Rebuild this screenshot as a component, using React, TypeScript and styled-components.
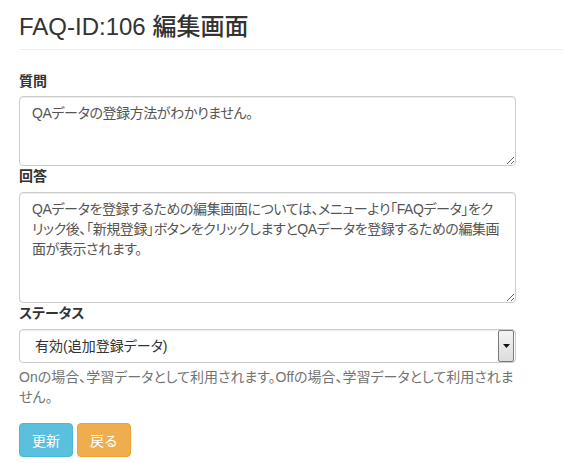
import styled, { createGlobalStyle } from "styled-components";

const GlobalStyle = createGlobalStyle`
  html, body {
    margin: 0;
    padding: 0;
    background: #fff;
  }
  body {
    font-family: "Liberation Sans", "Noto Sans CJK JP", sans-serif;
    font-size: 14px;
    line-height: 20px;
    color: #333;
    font-feature-settings: "palt";
  }
`

const Page = styled.div`
  width: 564px;
  padding-left: 19px;
  box-sizing: border-box;
`

const PageHeader = styled.div`
  padding-top: 14px;
  padding-bottom: 9px;
  margin-bottom: 21px;
  border-bottom: 1px solid #eee;

  & h3 {
    margin: 0;
    font-size: 24px;
    line-height: 26px;
    font-weight: 500;
    color: #333;
  }
`

const Form = styled.form`
  width: 497px;
  display: flex;
  flex-direction: column;
`

const Label = styled.label<{ $gap: number }>`
  display: block;
  font-weight: 700;
  line-height: 20px;
  margin-bottom: ${(p) => p.$gap}px;
`

const TextArea = styled.textarea<{ $height: number }>`
  display: block;
  width: 100%;
  height: ${(p) => p.$height}px;
  box-sizing: border-box;
  padding: 6px 12px;
  border: 1px solid #ccc;
  border-radius: 4px;
  box-shadow: inset 0 1px 1px rgba(0, 0, 0, 0.075);
  font-family: inherit;
  font-size: 14px;
  line-height: 20px;
  letter-spacing: -0.4px;
  color: #555;
  resize: vertical;
  outline: none;
  font-feature-settings: "palt";
`

const SelectWrap = styled.div`
  position: relative;
  height: 34px;
`

const Select = styled.select`
  appearance: none;
  -webkit-appearance: none;
  width: 100%;
  height: 34px;
  box-sizing: border-box;
  padding: 0 24px 0 15px;
  border: 1px solid #ccc;
  border-radius: 4px;
  background: #fff;
  box-shadow: inset 0 1px 1px rgba(0, 0, 0, 0.075);
  font-family: inherit;
  font-size: 14px;
  color: #333;
  outline: none;
  font-feature-settings: "palt";
`

// select のドロップダウンボタン
const ArrowButton = styled.span`
  position: absolute;
  top: 1px;
  right: 2px;
  width: 16px;
  height: 32px;
  box-sizing: border-box;
  border: 1px solid #7a7a7a;
  border-radius: 2px;
  background: linear-gradient(#f4f4f4, #dcdcdc);
  display: flex;
  align-items: center;
  justify-content: center;
  pointer-events: none;
`

const HelpBlock = styled.p`
  margin: 4px 0 0;
  color: #737373;
  line-height: 20px;
`

const ButtonRow = styled.div`
  display: flex;
  gap: 4px;
  margin-top: 16px;
`

const Button = styled.button<{ $color: string; $border: string }>`
  height: 34px;
  padding: 0 12px;
  border: 1px solid ${(p) => p.$border};
  border-radius: 4px;
  background: ${(p) => p.$color};
  color: #fff;
  font-family: inherit;
  font-size: 14px;
  cursor: pointer;
`

export default function App() {
  return (
    <>
      <GlobalStyle />
      <Page>
        <PageHeader>
          <h3>FAQ-ID:106 編集画面</h3>
        </PageHeader>
        <Form onSubmit={(e) => e.preventDefault()}>
          <Label $gap={5}>質問</Label>
          <TextArea $height={70} defaultValue="QAデータの登録方法がわかりません。" />
          <Label $gap={6}>回答</Label>
          <TextArea
            $height={111}
            defaultValue="QAデータを登録するための編集画面については、メニューより「FAQデータ」をクリック後、「新規登録」ボタンをクリックしますとQAデータを登録するための編集画面が表示されます。"
          />
          <Label $gap={6}>ステータス</Label>
          <SelectWrap>
            <Select defaultValue="1">
              <option value="1">有効(追加登録データ)</option>
              <option value="0">無効</option>
            </Select>
            <ArrowButton>
              <svg width="7" height="4" viewBox="0 0 7 4">
                <path d="M0 0h7L3.5 4z" fill="#111" />
              </svg>
            </ArrowButton>
          </SelectWrap>
          <HelpBlock>
            Onの場合、学習データとして利用されます。Offの場合、学習データとして利用されません。
          </HelpBlock>
          <ButtonRow>
            <Button type="submit" $color="#5bc0de" $border="#46b8da">更新</Button>
            <Button type="button" $color="#f0ad4e" $border="#eea236">戻る</Button>
          </ButtonRow>
        </Form>
      </Page>
    </>
  );
}
